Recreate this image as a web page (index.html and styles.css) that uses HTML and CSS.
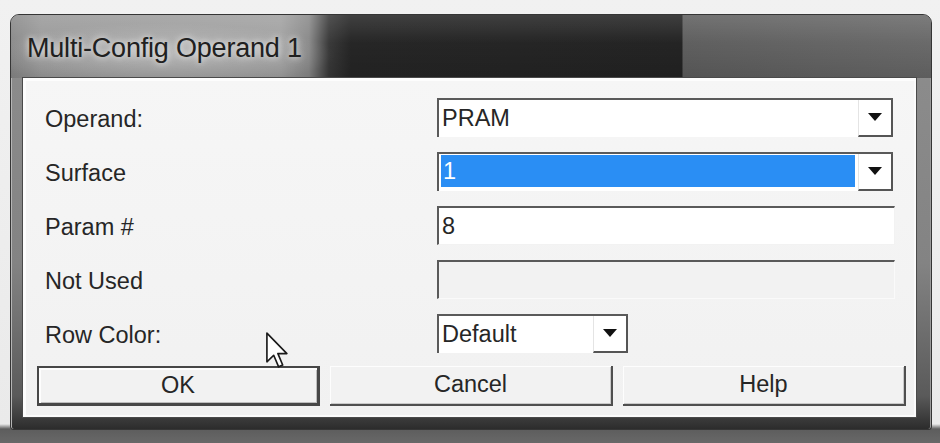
FILE: index.html
```html
<!DOCTYPE html>
<html lang="en">
<head>
<meta charset="utf-8">
<title>Multi-Config Operand 1</title>
<link rel="stylesheet" href="styles.css">
</head>
<body>
<div class="desk">
  <div class="window">
    <div class="titlebar"><span class="title">Multi-Config Operand 1</span></div>
    <div class="client">
      <div class="form">
        <div class="row">
          <span class="label">Operand:</span>
          <div class="combo wide">
            <span class="value">PRAM</span>
            <span class="drop"><svg width="14" height="8" viewBox="0 0 14 8"><path d="M0 0H14L7 8Z" fill="#111"/></svg></span>
          </div>
        </div>
        <div class="row">
          <span class="label">Surface</span>
          <div class="combo wide">
            <span class="value sel">1</span>
            <span class="drop"><svg width="14" height="8" viewBox="0 0 14 8"><path d="M0 0H14L7 8Z" fill="#111"/></svg></span>
          </div>
        </div>
        <div class="row">
          <span class="label">Param #</span>
          <div class="edit"><span class="value">8</span></div>
        </div>
        <div class="row">
          <span class="label">Not Used</span>
          <div class="edit disabled"></div>
        </div>
        <div class="row">
          <span class="label">Row Color:</span>
          <div class="combo narrow">
            <span class="value">Default</span>
            <span class="drop"><svg width="14" height="8" viewBox="0 0 14 8"><path d="M0 0H14L7 8Z" fill="#111"/></svg></span>
          </div>
        </div>
      </div>
      <div class="buttons">
        <button class="btn default">OK</button>
        <button class="btn">Cancel</button>
        <button class="btn">Help</button>
      </div>
    </div>
  </div>
  <svg class="pointer" width="22" height="37" viewBox="0 0 12 20"><path d="M0.5 0.5V16.2L4.2 12.6L6.9 18.9L9.1 17.9L6.5 11.7H11.4Z" fill="#fff" stroke="#1a1a1a" stroke-width="0.9" stroke-linejoin="round"/></svg>
</div>
</body>
</html>
```

FILE: styles.css
```css
* { box-sizing: border-box; }

html, body { margin: 0; }

body {
  width: 940px;
  height: 443px;
  overflow: hidden;
  font-family: "Liberation Sans", Arial, sans-serif;
  background: #ececec;
}

.desk {
  position: relative;
  height: 443px;
  padding: 14px 8px 0 10px;
  background: linear-gradient(to bottom, #f1f1f1 0, #eaeaea 424px, #5d5d5d 429px, #686868 443px);
}

/* window chrome */
.window {
  width: 922px;
  height: 416px;
  display: flex;
  flex-direction: column;
  border: 1px solid #353535;
  border-radius: 9px 9px 3px 3px;
  overflow: hidden;
  background: linear-gradient(to bottom, #8e8e8e 0, #838383 60%, #5a5a5a 92%, #2c2c2c 100%);
  box-shadow: inset 1px 0 0 #b5b5b5, inset -1px 0 0 #9a9a9a;
}

.titlebar {
  height: 63px;
  flex: none;
  display: flex;
  align-items: center;
  padding: 4px 0 0 16px;
  background:
    radial-gradient(ellipse 175px 32px at 150px 40px, rgba(255,255,255,.28), rgba(255,255,255,0)),
    linear-gradient(to bottom, rgba(255,255,255,.12), rgba(255,255,255,0) 45%, rgba(0,0,0,.12)),
    linear-gradient(to right, #8b8b8b 0, #9b9b9b 30px, #a2a2a2 270px, #8a8a8a 298px, #3a3a3a 318px, #262626 340px, #242424 671px, #5f5f5f 672px, #6a6a6a 100%);
}

.title {
  font-size: 27px;
  letter-spacing: -0.2px;
  color: #202020;
  text-shadow: 0 0 6px rgba(255,255,255,.75), 0 0 12px rgba(255,255,255,.4);
}

.client {
  flex: 1;
  margin: 0 15px 12px 12px;
  padding: 20px 12px 11px 14px;
  background: linear-gradient(to bottom, #f6f6f6, #f1f1f1);
  box-shadow: 0 0 0 1px #4a4a4a, inset 3px 3px 0 #fdfdfd, inset -2px -2px 0 #fbfbfb;
  display: flex;
  flex-direction: column;
}

.form {
  display: flex;
  flex-direction: column;
  gap: 15px;
  padding-left: 8px;
}

.row {
  height: 39px;
  display: flex;
  align-items: center;
}

.label,
.value,
.btn {
  font-size: 23.5px;
  color: #262626;
}

.label {
  width: 392px;
  flex: none;
  padding-top: 3px;
}

/* drop-down combo boxes */
.combo {
  height: 39px;
  display: flex;
  background: #fff;
  border-top: 2px solid #5a5a5a;
  border-left: 2px solid #5a5a5a;
}

.combo.wide { width: 456px; }
.combo.narrow { width: 191px; }

.combo .value {
  flex: 1;
  display: flex;
  align-items: center;
  padding-left: 3px;
}

.combo .value.sel {
  margin: 1px 3px 4px 2px;
  padding-left: 2px;
  background: #2a8ef4;
  color: #fff;
}

.drop {
  width: 35px;
  flex: none;
  display: flex;
  align-items: center;
  justify-content: center;
  padding-bottom: 1px;
  background: #fff;
  border-left: 1px solid #e4e4e4;
  border-right: 2px solid #555;
  border-bottom: 2px solid #555;
}

/* text boxes */
.edit {
  width: 458px;
  height: 39px;
  display: flex;
  align-items: center;
  background: #fff;
  border-top: 2px solid #5a5a5a;
  border-left: 2px solid #5a5a5a;
  border-right: 1px solid #f2f2f2;
  border-bottom: 1px solid #f2f2f2;
}

.edit .value { padding-left: 3px; }

.edit.disabled { background: #f2f2f2; border-right-color: #fafafa; border-bottom-color: #fafafa; }

/* push buttons */
.buttons {
  margin-top: 13px;
  display: grid;
  grid-template-columns: repeat(3, 283px);
  column-gap: 10px;
}

.btn {
  height: 40px;
  margin: 0;
  padding: 0 0 1px;
  font-family: inherit;
  background: #f2f2f2;
  border: none;
  border-right: 2px solid #4f4f4f;
  border-bottom: 2px solid #4f4f4f;
  box-shadow: inset 1px 1px 0 #fdfdfd, inset -1px -1px 0 #c9c9c9;
  display: flex;
  align-items: center;
  justify-content: center;
}

.btn.default {
  border: 2px solid #474747;
  border-right-width: 3px;
  border-bottom-width: 3px;
  box-shadow: inset 2px 2px 0 #fdfdfd, inset -1px -1px 0 #bdbdbd;
}

/* mouse pointer hovering over the dialog */
.pointer {
  position: absolute;
  left: 266px;
  top: 332px;
}
```
